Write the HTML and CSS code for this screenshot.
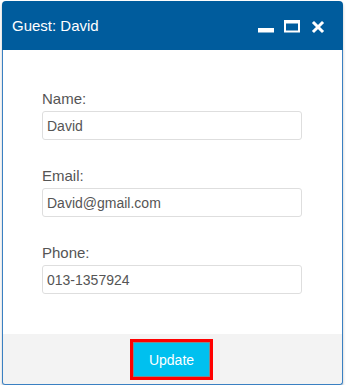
FILE: index.html
```html
<!DOCTYPE html>
<html lang="en">

<head>
    <meta charset="UTF-8">
    <meta name="viewport" content="width=device-width, initial-scale=1.0">
    <title>Guest: David</title>
    <link rel="stylesheet" href="styles.css">
</head>

<body>
    <div class="window">
        <!-- title bar -->
        <div class="window-header">
            <span class="window-title">Guest: David</span>
            <div class="window-actions">
                <svg class="icon" viewBox="0 0 16 16" width="16" height="16">
                    <rect x="0" y="10" width="16" height="4.5" fill="#fff"/>
                </svg>
                <svg class="icon" viewBox="0 0 16 16" width="16" height="16">
                    <rect x="1" y="3" width="14" height="10.5" fill="none" stroke="#fff" stroke-width="2"/>
                    <rect x="0" y="2" width="16" height="3.5" fill="#fff"/>
                </svg>
                <svg class="icon" viewBox="0 0 16 16" width="16" height="16">
                    <path d="M4 5 L12 13 M12 5 L4 13" stroke="#fff" stroke-width="3" stroke-linecap="square"/>
                </svg>
            </div>
        </div>

        <!-- form -->
        <div class="window-content">
            <div class="field">
                <label for="guest-name">Name:</label>
                <input type="text" id="guest-name" value="David">
            </div>
            <div class="field">
                <label for="guest-email">Email:</label>
                <input type="text" id="guest-email" value="David@gmail.com">
            </div>
            <div class="field">
                <label for="guest-phone">Phone:</label>
                <input type="text" id="guest-phone" value="013-1357924">
            </div>
        </div>

        <div class="window-footer">
            <button id="update-button">Update</button>
        </div>
    </div>
</body>

</html>
```

FILE: styles.css
```css
/* page */
body {
    margin: 0;
    background: #fff;
    font-family: 'Liberation Sans', Arial, sans-serif;
}

/* window frame */
.window {
    width: 341px;
    margin: 1px 0 0 2px;
    border-radius: 4px 4px 3px 3px;
    box-shadow: 0 2px 3px rgba(0, 0, 0, 0.25);
}

.window-header {
    height: 49px;
    background-color: #005c9d;
    border-radius: 4px 4px 0 0;
    display: flex;
    align-items: center;
    justify-content: space-between;
    padding: 0 17px 0 10px;
    color: #fff;
}

.window-title {
    font-size: 15px;
}

.window-actions {
    display: flex;
    align-items: center;
    gap: 10px;
}

.window-actions .icon {
    display: block;
}

/* form body */
.window-content {
    border-left: 1px solid #3a80c2;
    border-right: 1px solid #3a80c2;
    padding: 40px 40px 13px 39px;
}

.field {
    margin-bottom: 27px;
}

.field label {
    display: block;
    font-size: 15px;
    line-height: 17px;
    color: #555;
    margin-bottom: 4px;
}

.field input {
    box-sizing: border-box;
    width: 260px;
    height: 29px;
    padding: 0 4px;
    border: 1px solid #dedede;
    border-radius: 3px;
    font-family: inherit;
    font-size: 14px;
    color: #555;
    outline: none;
}

/* footer with button */
.window-footer {
    height: 50px;
    background-color: #f3f3f3;
    border: 1px solid #3a80c2;
    border-top: none;
    border-radius: 0 0 3px 3px;
    display: flex;
    justify-content: center;
    align-items: flex-start;
    padding-top: 8px;
    box-sizing: border-box;
    height: 51px;
}

button {
    width: 77px;
    height: 35px;
    background-color: #00c0ef;
    border: 1px solid #7d8a90;
    outline: 3px solid #f00;
    color: #fff;
    font-family: inherit;
    font-size: 14px;
    cursor: pointer;
    margin-left: -2px;
}
```
